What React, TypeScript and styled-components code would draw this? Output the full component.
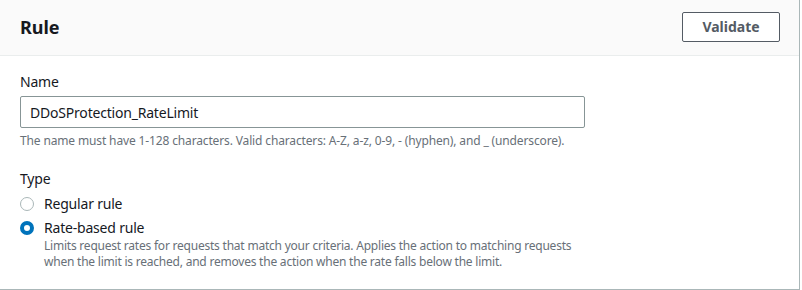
import styled, { createGlobalStyle } from "styled-components";

const GlobalStyle = createGlobalStyle`
  body {
    margin: 0;
    background: #ffffff;
    font-family: "Noto Sans", "Open Sans", Arial, sans-serif;
    color: #16191f;
  }
`;

const Panel = styled.div`
  width: 799px;
  height: 289px;
  border-right: 1px solid #aab7b8;
  border-bottom: 1px solid #aab7b8;
  background: #ffffff;
  display: flex;
  flex-direction: column;
`;

const Header = styled.div`
  display: flex;
  align-items: center;
  justify-content: space-between;
  height: 56px;
  box-sizing: border-box;
  padding: 0 19px 2px 20px;
  background: #fafafa;
  border-bottom: 1px solid #eaeded;
`;

const Title = styled.h2`
  margin: 0;
  font-size: 18px;
  font-weight: 700;
  line-height: 22px;
`;

const Button = styled.button`
  width: 98px;
  height: 30px;
  background: #ffffff;
  border: 1px solid #545b64;
  border-radius: 2px;
  color: #545b64;
  font-family: inherit;
  font-size: 14px;
  font-weight: 700;
  cursor: pointer;
`;

const Body = styled.div`
  padding: 15px 20px 0;
  display: flex;
  flex-direction: column;
  letter-spacing: -0.2px;
`;

const Label = styled.div<{ $top?: number }>`
  font-size: 14px;
  line-height: 22px;
  margin-top: ${(p) => p.$top ?? 0}px;
`;

const Input = styled.input`
  width: 565px;
  height: 32px;
  box-sizing: border-box;
  margin-top: 3px;
  padding: 0 9px;
  border: 1px solid #879596;
  border-radius: 2px;
  font-family: inherit;
  font-size: 14px;
  letter-spacing: -0.2px;
  color: #16191f;
  outline: none;
`;

const Hint = styled.div`
  margin-top: 5px;
  font-size: 12px;
  line-height: 16px;
  letter-spacing: -0.14px;
  color: #687078;
`;

const RadioRow = styled.label<{ $top: number }>`
  display: flex;
  align-items: flex-start;
  gap: 10px;
  margin-top: ${(p) => p.$top}px;
  cursor: pointer;
`;

const Dot = styled.span<{ $on?: boolean }>`
  flex: none;
  width: 14px;
  height: 14px;
  box-sizing: border-box;
  margin-top: 3px;
  border-radius: 50%;
  background: #ffffff;
  border: ${(p) => (p.$on ? "4px solid #0073bb" : "1px solid #aab7b8")};
`;

const RadioText = styled.div`
  display: flex;
  flex-direction: column;
`;

const RadioLabel = styled.span`
  font-size: 14px;
  line-height: 20px;
`;

const Description = styled.span`
  font-size: 12px;
  line-height: 16px;
  letter-spacing: -0.22px;
  color: #687078;
`;

export default function App() {
  return (
    <>
      <GlobalStyle />
      <Panel>
        <Header>
          <Title>Rule</Title>
          <Button>Validate</Button>
        </Header>
        <Body>
          <Label>Name</Label>
          <Input defaultValue="DDoSProtection_RateLimit" />
          <Hint>
            The name must have 1-128 characters. Valid characters: A-Z, a-z, 0-9, - (hyphen), and _ (underscore).
          </Hint>
          <Label $top={19}>Type</Label>
          <RadioRow $top={4}>
            <Dot />
            <RadioText>
              <RadioLabel>Regular rule</RadioLabel>
            </RadioText>
          </RadioRow>
          <RadioRow $top={4}>
            <Dot $on />
            <RadioText>
              <RadioLabel>Rate-based rule</RadioLabel>
              <Description>
                Limits request rates for requests that match your criteria. Applies the action to matching requests
                <br />
                when the limit is reached, and removes the action when the rate falls below the limit.
              </Description>
            </RadioText>
          </RadioRow>
        </Body>
      </Panel>
    </>
  );
}
